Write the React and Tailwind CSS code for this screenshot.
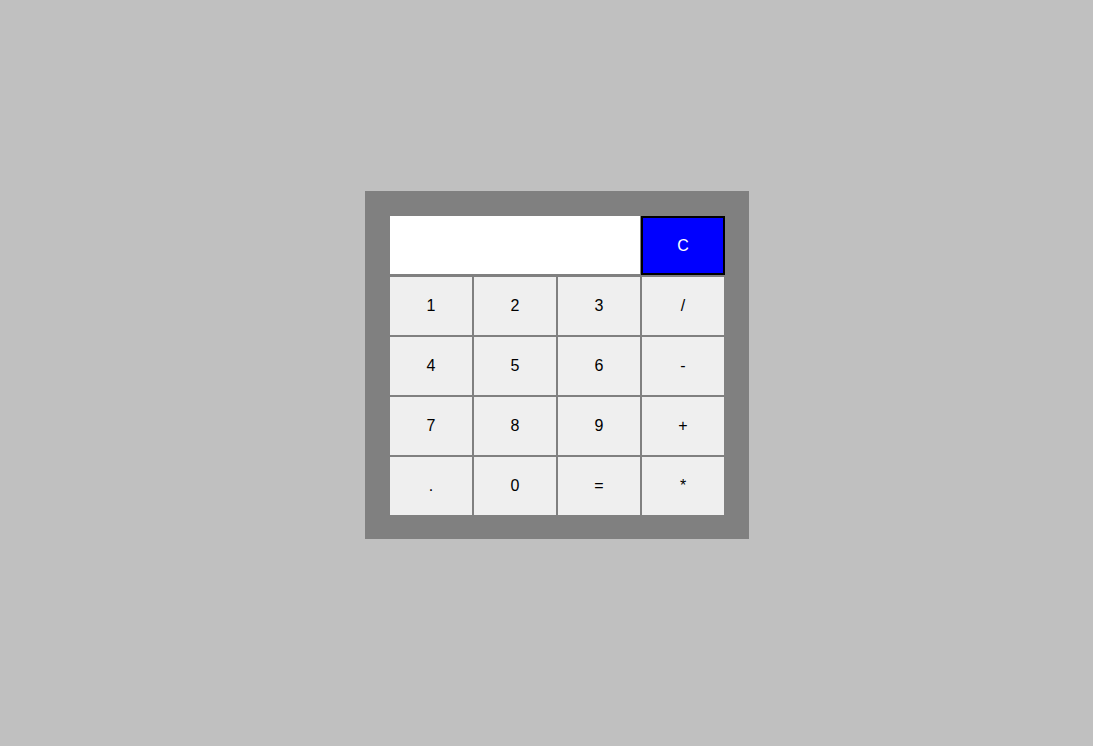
export default function App() {
  const keys = ["1", "2", "3", "/", "4", "5", "6", "-", "7", "8", "9", "+", ".", "0", "=", "*"];
  return (
    <div className="w-[1093px] h-[746px] bg-[#c0c0c0] pl-[365px] pt-[191px]" style={{ fontFamily: '"Liberation Sans", Arial, sans-serif' }}>
      <div className="w-[384px] h-[348px] bg-[#808080] pt-[25px] pl-[25px]">
        <div className="flex items-start">
          <div className="w-[250px] h-[58px] bg-white"></div>
          <button className="ml-px w-[84px] h-[59px] border-2 border-black bg-[#0000ff] text-white text-[16px] flex items-center justify-center">C</button>
        </div>
        <div className="mt-[2px] grid grid-cols-[repeat(4,82px)] auto-rows-[58px] gap-[2px]">
          {keys.map((k) => (
            <button key={k} className="bg-[#efefef] text-black text-[16px] flex items-center justify-center">{k}</button>
          ))}
        </div>
      </div>
    </div>
  );
}
